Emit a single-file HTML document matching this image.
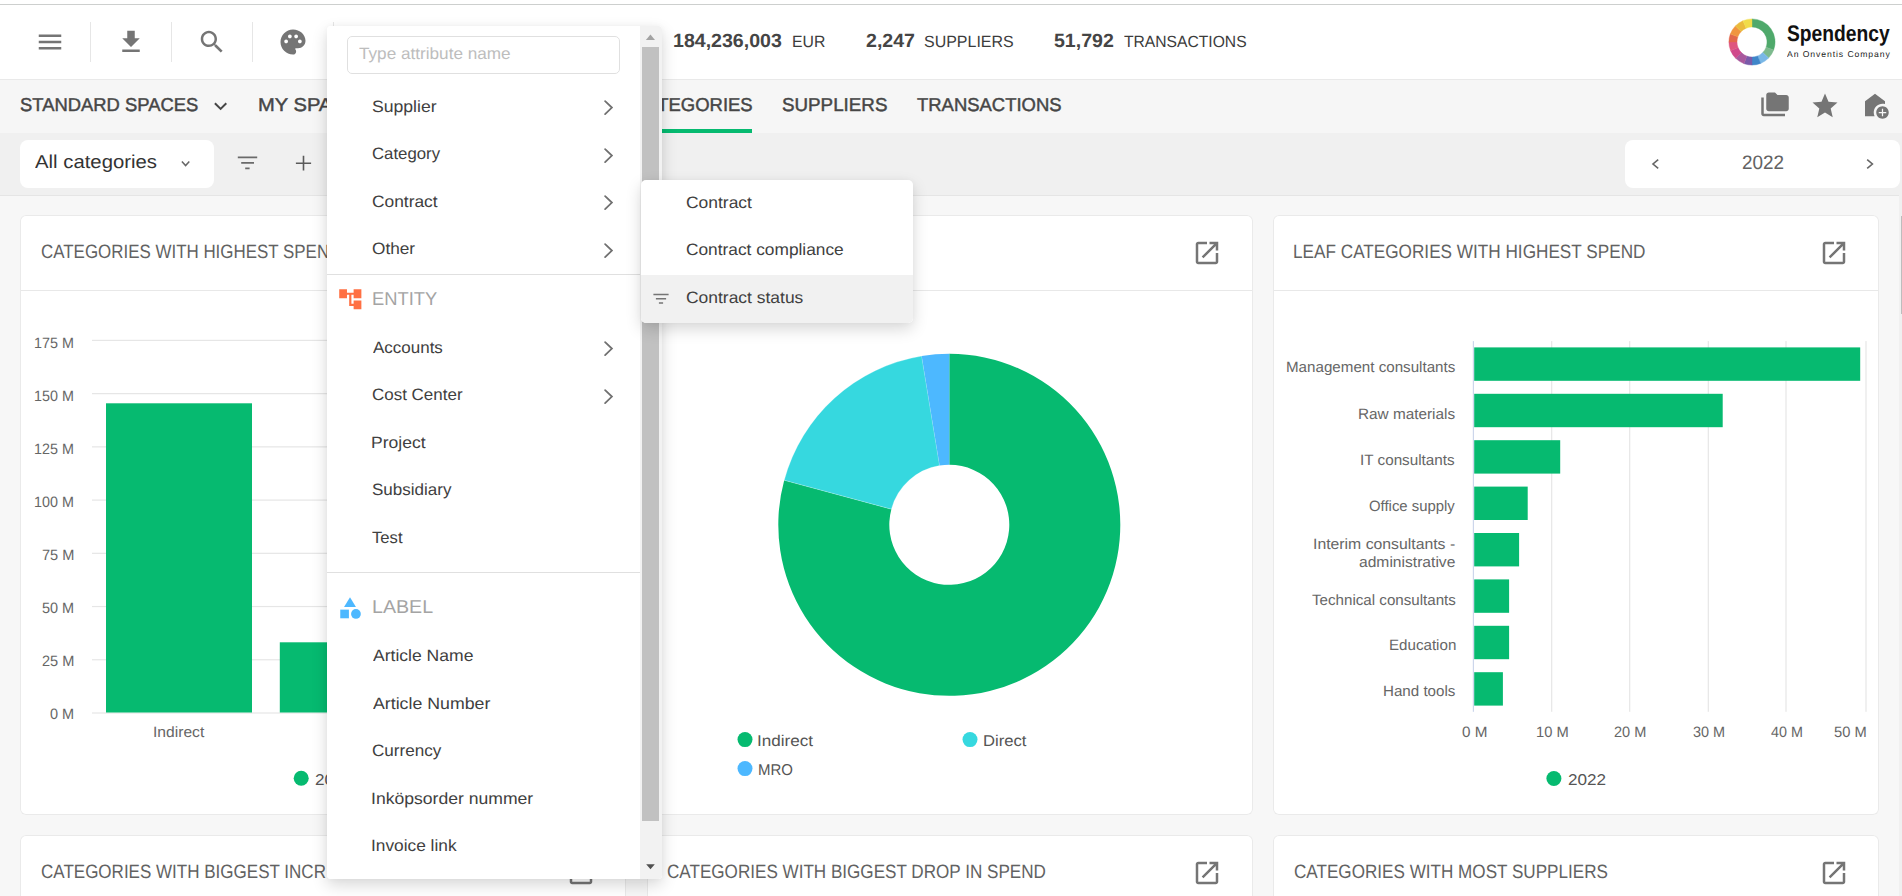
<!DOCTYPE html>
<html lang="en"><head><meta charset="utf-8"><title>Spendency</title>
<style>
html,body{margin:0;padding:0}
body{width:1902px;height:896px;overflow:hidden;background:#f7f7f7;font-family:"Liberation Sans",sans-serif;position:relative}
.abs,.t,.ic{position:absolute}
.t{white-space:nowrap;line-height:1;transform-origin:0 0;display:block;text-rendering:geometricPrecision}
.ic{display:block;overflow:visible}
#topline{left:0;top:0;width:1902px;height:4px;background:#fff;border-bottom:1px solid #cdcfce}
#header{left:0;top:5px;width:1902px;height:74px;background:#fff;border-bottom:1px solid #e9e9e9}
.sep{position:absolute;top:17px;width:1px;height:40px;background:#e6e6e6}
#nav{left:0;top:80px;width:1902px;height:53px;background:#f6f6f6}
#tabline{left:633px;top:49px;width:119px;height:4px;background:#06ba70}
#fbar{left:0;top:133px;width:1902px;height:62px;background:#f0f0f0;border-bottom:1px solid #e5e5e5}
.pill{position:absolute;background:#fff;border-radius:8px}
.card{position:absolute;background:#fff;box-shadow:inset 0 0 0 1px #eaeaea;border-radius:6px;overflow:hidden}
.card .hd{position:absolute;left:1px;top:75px;right:1px;height:1px;background:#e8e8e8}

#panel{left:327px;top:26px;width:335px;height:852.5px;background:#fff;border-radius:4px;overflow:hidden}
#panelshadow{left:327px;top:26px;width:335px;height:852.5px;border-radius:4px;box-shadow:0 6px 16px rgba(0,0,0,.155),0 0 6px rgba(0,0,0,.03)}
#sub{left:641px;top:180px;width:271.5px;height:142.5px;background:#fff;border-radius:5px;overflow:hidden}
#subshadow{left:641px;top:180px;width:271.5px;height:142.5px;border-radius:5px;box-shadow:0 6px 16px rgba(0,0,0,.155),0 0 6px rgba(0,0,0,.03)}
#pscroll{left:1899px;top:195px;width:3px;height:701px;background:#f0f0f0}
#pthumb{left:1901px;top:216px;width:1px;height:98px;background:#bdbdbd}
</style></head>
<body>
<div id="topline" class="abs"></div>
<div id="header" class="abs"><div class="sep" style="left:90px"></div>
<div class="sep" style="left:171px"></div>
<div class="sep" style="left:252px"></div>
<div class="sep" style="left:333px"></div>
<svg class="ic" style="left:35.00px;top:22.00px" width="30" height="30" viewBox="0 0 24 24"><path fill="#757575" d="M3 18h18v-2H3v2zm0-5h18v-2H3v2zm0-7v2h18V6H3z"/></svg>
<svg class="ic" style="left:116.00px;top:22.00px" width="30" height="30" viewBox="0 0 24 24"><path fill="#757575" d="M19 9h-4V3H9v6H5l7 7 7-7zM5 18v2h14v-2H5z"/></svg>
<svg class="ic" style="left:197.00px;top:22.30px" width="30" height="30" viewBox="0 0 24 24"><path fill="#757575" d="M15.5 14h-.79l-.28-.27C15.41 12.59 16 11.11 16 9.5 16 5.91 13.09 3 9.5 3S3 5.91 3 9.5 5.91 16 9.5 16c1.61 0 3.09-.59 4.23-1.57l.27.28v.79l5 4.99L20.49 19l-4.99-5zm-6 0C7.01 14 5 11.99 5 9.5S7.01 5 9.5 5 14 7.01 14 9.5 11.99 14 9.5 14z"/></svg>
<svg class="ic" style="left:277.80px;top:21.90px" width="30" height="30" viewBox="0 0 24 24"><path fill="#757575" d="M12 2C6.49 2 2 6.49 2 12s4.49 10 10 10c1.38 0 2.5-1.12 2.5-2.5 0-.61-.23-1.2-.64-1.67-.08-.1-.13-.21-.13-.33 0-.28.22-.5.5-.5H16c3.31 0 6-2.69 6-6 0-4.96-4.49-9-10-9zm5.5 11c-.83 0-1.5-.67-1.5-1.5s.67-1.5 1.5-1.5 1.5.67 1.5 1.5-.67 1.5-1.5 1.5zm-3-4c-.83 0-1.5-.67-1.5-1.5S13.67 6 14.5 6s1.5.67 1.5 1.5S15.33 9 14.5 9zM5 11.5c0-.83.67-1.5 1.5-1.5s1.5.67 1.5 1.5S7.33 13 6.5 13 5 12.33 5 11.5zm6-4c0 .83-.67 1.5-1.5 1.5S8 8.33 8 7.5 8.67 6 9.5 6s1.5.67 1.5 1.5z"/></svg>
<svg class="ic" style="left:0.00px;top:0.00px" width="1902" height="74" viewBox="0 0 1902 74"><path fill="#4fa96b" stroke="#4fa96b" stroke-width="0.4" d="M1752.00 13.90A23.10 23.10 0 0 1 1773.71 44.90L1766.10 42.13A15.00 15.00 0 0 0 1752.00 22.00Z"/><path fill="#7dba8e" stroke="#7dba8e" stroke-width="0.4" d="M1773.71 44.90A23.10 23.10 0 0 1 1768.62 53.05L1762.79 47.42A15.00 15.00 0 0 0 1766.10 42.13Z"/><path fill="#79b7e6" stroke="#79b7e6" stroke-width="0.4" d="M1768.62 53.05A23.10 23.10 0 0 1 1760.65 58.42L1757.62 50.91A15.00 15.00 0 0 0 1762.79 47.42Z"/><path fill="#3f86c9" stroke="#3f86c9" stroke-width="0.4" d="M1760.65 58.42A23.10 23.10 0 0 1 1752.00 60.10L1752.00 52.00A15.00 15.00 0 0 0 1757.62 50.91Z"/><path fill="#7a5aa9" stroke="#7a5aa9" stroke-width="0.4" d="M1752.00 60.10A23.10 23.10 0 0 1 1744.10 58.71L1746.87 51.10A15.00 15.00 0 0 0 1752.00 52.00Z"/><path fill="#a8589d" stroke="#a8589d" stroke-width="0.4" d="M1744.10 58.71A23.10 23.10 0 0 1 1735.67 53.33L1741.39 47.61A15.00 15.00 0 0 0 1746.87 51.10Z"/><path fill="#d0488b" stroke="#d0488b" stroke-width="0.4" d="M1735.67 53.33A23.10 23.10 0 0 1 1730.58 45.65L1738.09 42.62A15.00 15.00 0 0 0 1741.39 47.61Z"/><path fill="#df557f" stroke="#df557f" stroke-width="0.4" d="M1730.58 45.65A23.10 23.10 0 0 1 1728.90 37.00L1737.00 37.00A15.00 15.00 0 0 0 1738.09 42.62Z"/><path fill="#e2684b" stroke="#e2684b" stroke-width="0.4" d="M1728.90 37.00A23.10 23.10 0 0 1 1730.29 29.10L1737.90 31.87A15.00 15.00 0 0 0 1737.00 37.00Z"/><path fill="#f0953f" stroke="#f0953f" stroke-width="0.4" d="M1730.29 29.10A23.10 23.10 0 0 1 1735.38 20.95L1741.21 26.58A15.00 15.00 0 0 0 1737.90 31.87Z"/><path fill="#eabb3c" stroke="#eabb3c" stroke-width="0.4" d="M1735.38 20.95A23.10 23.10 0 0 1 1742.97 15.74L1746.14 23.19A15.00 15.00 0 0 0 1741.21 26.58Z"/><path fill="#f1dc49" stroke="#f1dc49" stroke-width="0.4" d="M1742.97 15.74A23.10 23.10 0 0 1 1752.00 13.90L1752.00 22.00A15.00 15.00 0 0 0 1746.14 23.19Z"/></svg>
<span class="t" style="left:673.27px;top:27px;font-size:19.1px;color:#454545;transform:scaleX(1.0250);font-weight:700;">184,236,003</span>
<span class="t" style="left:791.70px;top:29px;font-size:16.2px;color:#3c3c3c;transform:scaleX(0.9752);">EUR</span>
<span class="t" style="left:865.62px;top:27px;font-size:19.1px;color:#454545;transform:scaleX(1.0242);font-weight:700;">2,247</span>
<span class="t" style="left:924.07px;top:29px;font-size:16.2px;color:#3c3c3c;transform:scaleX(0.9867);">SUPPLIERS</span>
<span class="t" style="left:1054.00px;top:27px;font-size:19.1px;color:#454545;transform:scaleX(1.0237);font-weight:700;">51,792</span>
<span class="t" style="left:1124.35px;top:29px;font-size:16.2px;color:#3c3c3c;transform:scaleX(0.9665);">TRANSACTIONS</span>
<span class="t" style="left:1786.65px;top:18px;font-size:22.5px;color:#111;transform:scaleX(0.8552);font-weight:700;">Spendency</span>
<span class="t" style="left:1786.88px;top:45px;font-size:8.5px;color:#1a1a1a;transform:scaleX(1.0157);letter-spacing:0.9px;">An Onventis Company</span></div>
<div id="nav" class="abs"><svg class="ic" style="left:212.00px;top:18.00px" width="18" height="16" viewBox="0 0 18 16"><polyline points="2.9,5.2 8.6,10.9 14.3,5.2" fill="none" stroke="#464646" stroke-width="2"/></svg>
<div id="tabline" class="abs"></div>
<svg class="ic" style="left:1759.60px;top:10.10px" width="30" height="30" viewBox="0 0 24 24"><path fill="#757575" d="M3 6H1v13c0 1.1.9 2 2 2h17v-2H3V6z M21 4h-7l-2-2H7c-1.1 0-1.99.9-1.99 2L5 15c0 1.1.9 2 2 2h14c1.1 0 2-.9 2-2V6c0-1.1-.9-2-2-2z"/></svg>
<svg class="ic" style="left:1810.10px;top:10.50px" width="30" height="30" viewBox="0 0 24 24"><path fill="#757575" d="M12 17.27L18.18 21l-1.64-7.03L22 9.24l-7.19-.61L12 2 9.19 8.63 2 9.24l5.46 4.73L5.82 21z"/></svg>
<svg class="ic" style="left:1859.60px;top:10.00px" width="30" height="30" viewBox="0 0 24 24"><path fill="#757575" d="M18 11c.7 0 1.37.1 2 .29V9l-8-6-8 6v12h7.68A6.995 6.995 0 0 1 11 18c0-3.87 3.13-7 7-7z M18 13c-2.76 0-5 2.24-5 5s2.24 5 5 5 5-2.24 5-5-2.24-5-5-5zm3 5.5h-2.5V21h-1v-2.5H15v-1h2.5V15h1v2.5H21v1z"/></svg>
<span class="t" style="left:19.76px;top:16px;font-size:18.7px;color:#464646;transform:scaleX(0.9848);-webkit-text-stroke:0.45px #464646;">STANDARD SPACES</span>
<span class="t" style="left:257.55px;top:16px;font-size:18.7px;color:#464646;transform:scaleX(1.0783);-webkit-text-stroke:0.45px #464646;">MY SPACES</span>
<span class="t" style="left:632.56px;top:16px;font-size:18.7px;color:#464646;transform:scaleX(0.9880);-webkit-text-stroke:0.45px #464646;">CATEGORIES</span>
<span class="t" style="left:781.75px;top:16px;font-size:18.7px;color:#464646;transform:scaleX(1.0049);-webkit-text-stroke:0.45px #464646;">SUPPLIERS</span>
<span class="t" style="left:916.79px;top:16px;font-size:18.7px;color:#464646;transform:scaleX(0.9875);-webkit-text-stroke:0.45px #464646;">TRANSACTIONS</span></div>
<div id="fbar" class="abs"><div class="pill" style="left:20px;top:7.2px;width:194px;height:47.5px"></div>
<svg class="ic" style="left:179.00px;top:25.00px" width="14" height="12" viewBox="0 0 14 12"><polyline points="2.9,3.6 6.6,7.6 10.3,3.6" fill="none" stroke="#666" stroke-width="1.5"/></svg>
<svg class="ic" style="left:237.00px;top:22.00px" width="22" height="16" viewBox="0 0 22 16"><path d="M0.8 2.4h19.4M4.2 7.9h12.8M8.2 13.4h4.4" stroke="#6a6a6a" stroke-width="1.7" fill="none"/></svg>
<svg class="ic" style="left:295.00px;top:22.00px" width="17" height="17" viewBox="0 0 17 17"><path d="M0.9 8.2h15.2M8.5 0.7v14.9" stroke="#5a5a5a" stroke-width="1.6" fill="none"/></svg>
<div class="pill" style="left:1625px;top:7.0px;width:275px;height:47.8px"></div>
<svg class="ic" style="left:1648.00px;top:23.00px" width="14" height="16" viewBox="0 0 14 16"><polyline points="10.2,3.6 5,8 10.2,12.4" fill="none" stroke="#666" stroke-width="1.6"/></svg>
<svg class="ic" style="left:1863.00px;top:23.00px" width="14" height="16" viewBox="0 0 14 16"><polyline points="4.2,3.6 9.4,8 4.2,12.4" fill="none" stroke="#666" stroke-width="1.6"/></svg>
<span class="t" style="left:35.16px;top:20px;font-size:18.7px;color:#333;transform:scaleX(1.0873);">All categories</span>
<span class="t" style="left:1741.65px;top:21px;font-size:19.5px;color:#636363;transform:scaleX(0.9706);">2022</span></div>
<div class="card" id="card00" style="left:20px;top:215px;width:606px;height:600px"><div class="hd"></div>
<svg class="ic" style="left:545.80px;top:23.00px" width="30" height="30" viewBox="0 0 24 24"><path fill="#757575" d="M19 19H5V5h7V3H5c-1.11 0-2 .9-2 2v14c0 1.1.89 2 2 2h14c1.1 0 2-.9 2-2v-7h-2v7zM14 3v2h3.59l-9.83 9.83 1.41 1.41L19 6.41V10h2V3h-7z"/></svg>
<svg class="ic" style="left:0.00px;top:0.00px" width="606" height="599" viewBox="0 0 606 599"><rect x="72.00" y="124.80" width="500.00" height="1.2" fill="#e6e6e6"/><rect x="72.00" y="178.03" width="500.00" height="1.2" fill="#e6e6e6"/><rect x="72.00" y="231.26" width="500.00" height="1.2" fill="#e6e6e6"/><rect x="72.00" y="284.49" width="500.00" height="1.2" fill="#e6e6e6"/><rect x="72.00" y="337.72" width="500.00" height="1.2" fill="#e6e6e6"/><rect x="72.00" y="390.95" width="500.00" height="1.2" fill="#e6e6e6"/><rect x="72.00" y="444.18" width="500.00" height="1.2" fill="#e6e6e6"/><rect x="72.00" y="497.41" width="500.00" height="1.2" fill="#e6e6e6"/><rect x="86.00" y="188.30" width="146" height="309.20" fill="#06ba70"/><rect x="259.80" y="427.30" width="146" height="70.20" fill="#06ba70"/><circle cx="281.20" cy="563.30" r="7.5" fill="#06ba70"/></svg>
<span class="t" style="left:20.84px;top:28px;font-size:19.3px;color:#626262;transform:scaleX(0.8780);">CATEGORIES WITH HIGHEST SPEND</span>
<span class="t" style="left:14.11px;top:121px;font-size:15.0px;color:#666;transform:scaleX(0.9563);">175 M</span>
<span class="t" style="left:14.11px;top:174px;font-size:15.0px;color:#666;transform:scaleX(0.9563);">150 M</span>
<span class="t" style="left:14.11px;top:227px;font-size:15.0px;color:#666;transform:scaleX(0.9563);">125 M</span>
<span class="t" style="left:14.11px;top:280px;font-size:15.0px;color:#666;transform:scaleX(0.9563);">100 M</span>
<span class="t" style="left:21.65px;top:333px;font-size:15.0px;color:#666;transform:scaleX(0.9698);">75 M</span>
<span class="t" style="left:21.82px;top:386px;font-size:15.0px;color:#666;transform:scaleX(0.9646);">50 M</span>
<span class="t" style="left:21.67px;top:439px;font-size:15.0px;color:#666;transform:scaleX(0.9693);">25 M</span>
<span class="t" style="left:29.83px;top:492px;font-size:15.0px;color:#666;transform:scaleX(0.9660);">0 M</span>
<span class="t" style="left:132.66px;top:510px;font-size:15.0px;color:#666;transform:scaleX(1.0420);">Indirect</span>
<span class="t" style="left:314.67px;top:510px;font-size:15.0px;color:#666;transform:scaleX(0.9000);">Direct</span>
<span class="t" style="left:294.74px;top:558px;font-size:15.6px;color:#555;transform:scaleX(1.0990);">2022</span></div>
<div class="card" id="card01" style="left:646.5px;top:215px;width:606px;height:600px"><div class="hd"></div>
<svg class="ic" style="left:545.80px;top:23.00px" width="30" height="30" viewBox="0 0 24 24"><path fill="#757575" d="M19 19H5V5h7V3H5c-1.11 0-2 .9-2 2v14c0 1.1.89 2 2 2h14c1.1 0 2-.9 2-2v-7h-2v7zM14 3v2h3.59l-9.83 9.83 1.41 1.41L19 6.41V10h2V3h-7z"/></svg>
<svg class="ic" style="left:0.00px;top:0.00px" width="606" height="599" viewBox="0 0 606 599"><path fill="#06ba70" d="M302.30 138.80A171.00 171.00 0 1 1 137.20 265.25L244.37 294.17A60.00 60.00 0 1 0 302.30 249.80Z"/><path fill="#36d8df" stroke="#fff" stroke-opacity=".45" stroke-width=".6" d="M137.20 265.25A171.00 171.00 0 0 1 274.67 141.05L292.60 250.59A60.00 60.00 0 0 0 244.37 294.17Z"/><path fill="#4db8ff" d="M274.67 141.05A171.00 171.00 0 0 1 302.30 138.80L302.30 249.80A60.00 60.00 0 0 0 292.60 250.59Z"/><circle cx="98.00" cy="524.60" r="7.5" fill="#06ba70"/><circle cx="323.00" cy="524.60" r="7.5" fill="#36d8df"/><circle cx="98.00" cy="553.60" r="7.5" fill="#4db8ff"/></svg>
<span class="t" style="left:110.52px;top:519px;font-size:15.6px;color:#555;transform:scaleX(1.0972);">Indirect</span>
<span class="t" style="left:336.33px;top:519px;font-size:15.6px;color:#555;transform:scaleX(1.0680);">Direct</span>
<span class="t" style="left:111.27px;top:548px;font-size:15.6px;color:#555;transform:scaleX(0.9606);">MRO</span></div>
<div class="card" id="card02" style="left:1273px;top:215px;width:606px;height:600px"><div class="hd"></div>
<svg class="ic" style="left:545.80px;top:23.00px" width="30" height="30" viewBox="0 0 24 24"><path fill="#757575" d="M19 19H5V5h7V3H5c-1.11 0-2 .9-2 2v14c0 1.1.89 2 2 2h14c1.1 0 2-.9 2-2v-7h-2v7zM14 3v2h3.59l-9.83 9.83 1.41 1.41L19 6.41V10h2V3h-7z"/></svg>
<svg class="ic" style="left:0.00px;top:0.00px" width="606" height="599" viewBox="0 0 606 599"><rect x="278.10" y="126.10" width="1.2" height="370.70" fill="#e6e6e6"/><rect x="356.10" y="126.10" width="1.2" height="370.70" fill="#e6e6e6"/><rect x="434.70" y="126.10" width="1.2" height="370.70" fill="#e6e6e6"/><rect x="512.40" y="126.10" width="1.2" height="370.70" fill="#e6e6e6"/><rect x="592.40" y="126.10" width="1.2" height="370.70" fill="#e6e6e6"/><rect x="199.80" y="126.10" width="1.2" height="370.70" fill="#ccd6eb"/><rect x="201.20" y="132.40" width="386.00" height="33.4" fill="#06ba70"/><rect x="201.20" y="178.80" width="248.50" height="33.4" fill="#06ba70"/><rect x="201.20" y="225.20" width="86.00" height="33.4" fill="#06ba70"/><rect x="201.20" y="271.60" width="53.50" height="33.4" fill="#06ba70"/><rect x="201.20" y="318.00" width="44.90" height="33.4" fill="#06ba70"/><rect x="201.20" y="364.40" width="34.90" height="33.4" fill="#06ba70"/><rect x="201.20" y="410.80" width="34.90" height="33.4" fill="#06ba70"/><rect x="201.20" y="457.20" width="28.70" height="33.4" fill="#06ba70"/><circle cx="280.90" cy="563.50" r="7.5" fill="#06ba70"/></svg>
<span class="t" style="left:20.29px;top:28px;font-size:19.3px;color:#626262;transform:scaleX(0.8907);">LEAF CATEGORIES WITH HIGHEST SPEND</span>
<span class="t" style="left:13.16px;top:145px;font-size:15.0px;color:#666;transform:scaleX(1.0101);">Management consultants</span>
<span class="t" style="left:85.34px;top:192px;font-size:15.0px;color:#666;transform:scaleX(1.0220);">Raw materials</span>
<span class="t" style="left:87.49px;top:238px;font-size:15.0px;color:#666;transform:scaleX(1.0169);">IT consultants</span>
<span class="t" style="left:96.20px;top:284px;font-size:15.0px;color:#666;transform:scaleX(0.9919);">Office supply</span>
<span class="t" style="left:38.56px;top:378px;font-size:15.0px;color:#666;transform:scaleX(1.0092);">Technical consultants</span>
<span class="t" style="left:115.56px;top:423px;font-size:15.0px;color:#666;transform:scaleX(1.0091);">Education</span>
<span class="t" style="left:110.06px;top:469px;font-size:15.0px;color:#666;transform:scaleX(1.0095);">Hand tools</span>
<span class="t" style="left:40.44px;top:322px;font-size:15.0px;color:#666;transform:scaleX(1.0526);">Interim consultants -</span>
<span class="t" style="left:86.24px;top:340px;font-size:15.0px;color:#666;transform:scaleX(1.0413);">administrative</span>
<span class="t" style="left:188.60px;top:510px;font-size:15.0px;color:#666;transform:scaleX(1.0177);">0 M</span>
<span class="t" style="left:262.98px;top:510px;font-size:15.0px;color:#666;transform:scaleX(0.9815);">10 M</span>
<span class="t" style="left:341.37px;top:510px;font-size:15.0px;color:#666;transform:scaleX(0.9693);">20 M</span>
<span class="t" style="left:420.15px;top:510px;font-size:15.0px;color:#666;transform:scaleX(0.9637);">30 M</span>
<span class="t" style="left:498.07px;top:510px;font-size:15.0px;color:#666;transform:scaleX(0.9568);">40 M</span>
<span class="t" style="left:560.71px;top:510px;font-size:15.0px;color:#666;transform:scaleX(0.9805);">50 M</span>
<span class="t" style="left:294.54px;top:558px;font-size:15.6px;color:#555;transform:scaleX(1.0990);">2022</span></div>
<div class="card" id="card10" style="left:20px;top:835px;width:606px;height:200px"><div class="hd"></div>
<svg class="ic" style="left:545.80px;top:23.00px" width="30" height="30" viewBox="0 0 24 24"><path fill="#757575" d="M19 19H5V5h7V3H5c-1.11 0-2 .9-2 2v14c0 1.1.89 2 2 2h14c1.1 0 2-.9 2-2v-7h-2v7zM14 3v2h3.59l-9.83 9.83 1.41 1.41L19 6.41V10h2V3h-7z"/></svg>
<div class="abs" style="left:0;top:0;width:306.3px;height:74px;overflow:hidden"><span class="t" style="left:20.83px;top:28px;font-size:19.3px;color:#626262;transform:scaleX(0.8827);">CATEGORIES WITH BIGGEST INCREASE IN SPEND</span></div></div>
<div class="card" id="card11" style="left:646.5px;top:835px;width:606px;height:200px"><div class="hd"></div>
<svg class="ic" style="left:545.80px;top:23.00px" width="30" height="30" viewBox="0 0 24 24"><path fill="#757575" d="M19 19H5V5h7V3H5c-1.11 0-2 .9-2 2v14c0 1.1.89 2 2 2h14c1.1 0 2-.9 2-2v-7h-2v7zM14 3v2h3.59l-9.83 9.83 1.41 1.41L19 6.41V10h2V3h-7z"/></svg>
<span class="t" style="left:20.83px;top:28px;font-size:19.3px;color:#626262;transform:scaleX(0.8863);">CATEGORIES WITH BIGGEST DROP IN SPEND</span></div>
<div class="card" id="card12" style="left:1273px;top:835px;width:606px;height:200px"><div class="hd"></div>
<svg class="ic" style="left:545.80px;top:23.00px" width="30" height="30" viewBox="0 0 24 24"><path fill="#757575" d="M19 19H5V5h7V3H5c-1.11 0-2 .9-2 2v14c0 1.1.89 2 2 2h14c1.1 0 2-.9 2-2v-7h-2v7zM14 3v2h3.59l-9.83 9.83 1.41 1.41L19 6.41V10h2V3h-7z"/></svg>
<span class="t" style="left:20.83px;top:28px;font-size:19.3px;color:#626262;transform:scaleX(0.8871);">CATEGORIES WITH MOST SUPPLIERS</span></div>
<div id="pscroll" class="abs"></div><div id="pthumb" class="abs"></div>
<div id="panelshadow" class="abs"></div>
<div id="panel" class="abs"><div class="abs" style="left:20px;top:10.3px;width:272.6px;height:37.8px;border:1px solid #e0e0e0;border-radius:5px;box-sizing:border-box"></div>
<svg class="ic" style="left:275.20px;top:73.20px" width="13" height="18" viewBox="0 0 13 18"><polyline points="3.1,2.1 9.9,8.6 3.1,15.1" fill="none" stroke="#707070" stroke-width="1.8" stroke-linecap="round"/></svg>
<svg class="ic" style="left:275.20px;top:120.90px" width="13" height="18" viewBox="0 0 13 18"><polyline points="3.1,2.1 9.9,8.6 3.1,15.1" fill="none" stroke="#707070" stroke-width="1.8" stroke-linecap="round"/></svg>
<svg class="ic" style="left:275.20px;top:168.40px" width="13" height="18" viewBox="0 0 13 18"><polyline points="3.1,2.1 9.9,8.6 3.1,15.1" fill="none" stroke="#707070" stroke-width="1.8" stroke-linecap="round"/></svg>
<svg class="ic" style="left:275.20px;top:216.00px" width="13" height="18" viewBox="0 0 13 18"><polyline points="3.1,2.1 9.9,8.6 3.1,15.1" fill="none" stroke="#707070" stroke-width="1.8" stroke-linecap="round"/></svg>
<svg class="ic" style="left:275.20px;top:314.10px" width="13" height="18" viewBox="0 0 13 18"><polyline points="3.1,2.1 9.9,8.6 3.1,15.1" fill="none" stroke="#707070" stroke-width="1.8" stroke-linecap="round"/></svg>
<svg class="ic" style="left:275.20px;top:361.70px" width="13" height="18" viewBox="0 0 13 18"><polyline points="3.1,2.1 9.9,8.6 3.1,15.1" fill="none" stroke="#707070" stroke-width="1.8" stroke-linecap="round"/></svg>
<div class="abs" style="left:0;top:248.0px;width:313px;height:1px;background:#e0e0e0"></div>
<div class="abs" style="left:0;top:546.0px;width:313px;height:1px;background:#e0e0e0"></div>
<svg class="ic" style="left:10.10px;top:259.80px" width="26.6" height="26.6" viewBox="0 0 24 24"><path fill="#ff7043" d="M22 11V3h-7v3H9V3H2v8h7V8h2v10h4v3h7v-8h-7v3h-2V8h2v3z"/></svg>
<svg class="ic" style="left:9.80px;top:569.00px" width="26" height="26" viewBox="0 0 24 24"><path fill="#4db8ff" d="M12 2l-5.5 9h11z"/><circle cx="17.5" cy="17.5" r="4.5" fill="#4db8ff"/><path fill="#4db8ff" d="M3 13.5h8v8H3z"/></svg>
<div class="abs" style="left:313px;top:0;width:22px;height:853px;background:#f2f2f2"></div>
<div class="abs" style="left:315.2px;top:20.9px;width:16.8px;height:773.7px;background:#c1c1c1"></div>
<svg class="ic" style="left:313.00px;top:0.00px" width="21" height="852" viewBox="0 0 21 852"><path d="M5.9 14H15L10.45 8.6z" fill="#a3a3a3"/><path d="M6.2 838.2h8.6l-4.3 5z" fill="#505050"/></svg>
<span class="t" style="left:31.61px;top:20px;font-size:16.4px;color:#bdbdbd;transform:scaleX(1.0468);">Type attribute name</span>
<span class="t" style="left:45.00px;top:73px;font-size:16.4px;color:#404040;transform:scaleX(1.0741);">Supplier</span>
<span class="t" style="left:44.95px;top:120px;font-size:16.4px;color:#404040;transform:scaleX(1.0237);">Category</span>
<span class="t" style="left:44.92px;top:168px;font-size:16.4px;color:#404040;transform:scaleX(1.0592);">Contract</span>
<span class="t" style="left:44.98px;top:215px;font-size:16.4px;color:#404040;transform:scaleX(1.0515);">Other</span>
<span class="t" style="left:45.77px;top:314px;font-size:16.4px;color:#404040;transform:scaleX(1.0360);">Accounts</span>
<span class="t" style="left:44.94px;top:361px;font-size:16.4px;color:#404040;transform:scaleX(1.0354);">Cost Center</span>
<span class="t" style="left:44.36px;top:409px;font-size:16.4px;color:#404040;transform:scaleX(1.0697);">Project</span>
<span class="t" style="left:45.03px;top:456px;font-size:16.4px;color:#404040;transform:scaleX(1.0376);">Subsidiary</span>
<span class="t" style="left:45.43px;top:504px;font-size:16.4px;color:#404040;transform:scaleX(1.0145);">Test</span>
<span class="t" style="left:45.77px;top:622px;font-size:16.4px;color:#404040;transform:scaleX(1.0704);">Article Name</span>
<span class="t" style="left:45.77px;top:670px;font-size:16.4px;color:#404040;transform:scaleX(1.0825);">Article Number</span>
<span class="t" style="left:44.93px;top:717px;font-size:16.4px;color:#404040;transform:scaleX(1.0438);">Currency</span>
<span class="t" style="left:44.18px;top:765px;font-size:16.4px;color:#404040;transform:scaleX(1.0727);">Inköpsorder nummer</span>
<span class="t" style="left:44.20px;top:812px;font-size:16.4px;color:#404040;transform:scaleX(1.0554);">Invoice link</span>
<span class="t" style="left:44.79px;top:264px;font-size:18.7px;color:#a4a4a4;transform:scaleX(0.9829);">ENTITY</span>
<span class="t" style="left:44.69px;top:572px;font-size:18.7px;color:#a4a4a4;transform:scaleX(1.0495);">LABEL</span></div>
<div id="subshadow" class="abs"></div>
<div id="sub" class="abs"><div class="abs" style="left:0;top:95px;width:271.5px;height:47.5px;background:#f1f1f1"></div>
<svg class="ic" style="left:12.00px;top:112.00px" width="17" height="14" viewBox="0 0 17 14"><path d="M0.4 2.5h15.2M2.9 6.7h10.2M5.9 10.9h4.2" stroke="#757575" stroke-width="1.5" fill="none"/></svg>
<span class="t" style="left:44.61px;top:15px;font-size:16.4px;color:#404040;transform:scaleX(1.0641);">Contract</span>
<span class="t" style="left:44.62px;top:62px;font-size:16.4px;color:#404040;transform:scaleX(1.0558);">Contract compliance</span>
<span class="t" style="left:44.61px;top:110px;font-size:16.4px;color:#404040;transform:scaleX(1.0643);">Contract status</span></div>
</body></html>
